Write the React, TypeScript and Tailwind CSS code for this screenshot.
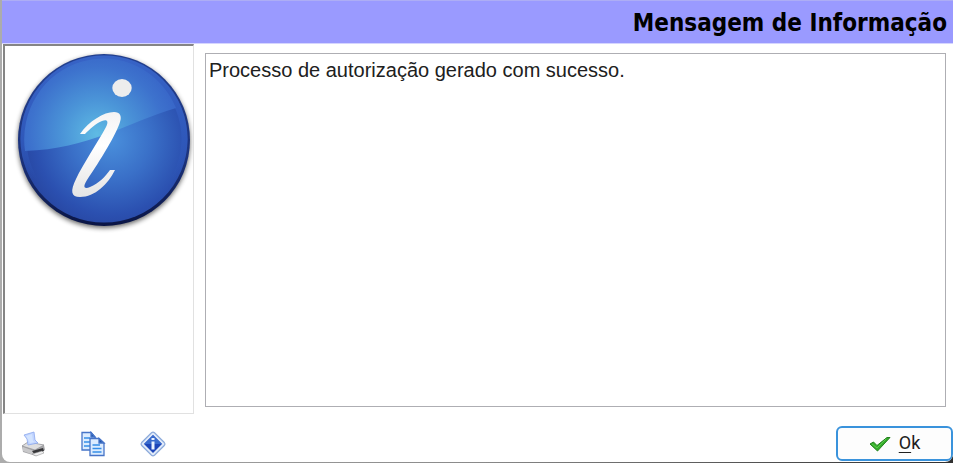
function InfoBadge() {
  return (
    <svg viewBox="0 0 180 184" className="w-[180px] h-[184px] shrink-0" role="img" aria-label="Informação">
      <defs>
        <radialGradient id="base" gradientUnits="userSpaceOnUse" cx="98" cy="90" r="88">
          <stop offset="0" stopColor="#4a90dc" />
          <stop offset="0.45" stopColor="#3a70c8" />
          <stop offset="0.85" stopColor="#2b50b0" />
          <stop offset="1" stopColor="#2848a4" />
        </radialGradient>
        <radialGradient id="gloss" gradientUnits="userSpaceOnUse" cx="84" cy="84" r="84">
          <stop offset="0" stopColor="#5fbbe4" />
          <stop offset="0.4" stopColor="#4b95d8" />
          <stop offset="0.8" stopColor="#3d72cd" />
          <stop offset="1" stopColor="#3866c8" />
        </radialGradient>
        <linearGradient id="rim" x1="0" y1="0" x2="0" y2="1">
          <stop offset="0" stopColor="#23408f" />
          <stop offset="0.6" stopColor="#1c337d" />
          <stop offset="1" stopColor="#0a1545" />
        </linearGradient>
        <linearGradient id="edge" x1="0" y1="0" x2="0" y2="1">
          <stop offset="0" stopColor="#3763c6" />
          <stop offset="0.5" stopColor="#2f58ba" />
          <stop offset="0.75" stopColor="#2f58ba" stopOpacity="0" />
        </linearGradient>
        <linearGradient id="letter" x1="0" y1="0" x2="0" y2="1">
          <stop offset="0" stopColor="#f4f4f4" />
          <stop offset="0.4" stopColor="#ffffff" />
          <stop offset="1" stopColor="#e4e4e4" />
        </linearGradient>
        <filter id="shade" x="-10%" y="-10%" width="120%" height="120%">
          <feGaussianBlur stdDeviation="2.5" />
        </filter>
      </defs>
      <circle cx="91" cy="92" r="86" fill="#000" opacity="0.6" filter="url(#shade)" />
      <circle cx="91" cy="90" r="86" fill="url(#rim)" />
      <circle cx="91" cy="89" r="83.5" fill="url(#base)" />
      <circle cx="91" cy="89" r="80.5" fill="none" stroke="url(#edge)" strokeWidth="6" />
      <path d="M12 101A79 81 0 0 1 163 58C116 72 75 99 12 101Z" fill="url(#gloss)" />
      <ellipse cx="109" cy="38" rx="9.7" ry="9" fill="#ededed" />
      <path
        d="M67 84C76 71 91 62 101 62C107 62 109 66 107 72C104 83 87 111 74 130C69 138 72 139 77 137C86 133 92 127 97 120L102 120C95 134 82 147 67 147C58 147 57 141 63 129C70 114 85 92 93 77C96 71 94 69 89 71C83 73 77 79 72 84Z"
        fill="url(#letter)"
      />
    </svg>
  );
}

function PrinterIcon() {
  return (
    <svg viewBox="0 0 26 26" className="size-[26px]" aria-hidden="true">
      <path d="M2 15L8 11L24 14L25 19L16 25L3 21Z" fill="#a5a5a8" />
      <path d="M2 15L8 11L24 14L15 19Z" fill="#dededf" stroke="#929296" strokeWidth=".7" />
      <path d="M4 4L14 1L15 9L18 12L8 14L7 8Z" fill="#c1d4ff" stroke="#8ba8ee" strokeWidth=".8" />
      <path d="M6 5L12 3L13 10L15 11L10 12Z" fill="#d3e4ff" />
      <path d="M3 16L14 20V24L3 20Z" fill="#c8c8ca" />
      <path d="M12 20L23 17L24 20L15 24Z" fill="#353538" />
      <path d="M12 23L22 20L24 22L16 25Z" fill="#eeeeef" stroke="#888" strokeWidth=".5" />
    </svg>
  );
}

function CopyIcon() {
  return (
    <svg viewBox="0 0 26 26" className="size-[26px]" aria-hidden="true">
      <g stroke="#4674c8" strokeWidth="1.3">
        <path d="M2 1.5H11L15 6V19H2Z" fill="#dcecff" />
        <path d="M11 1.5V6H15Z" fill="#1f55a8" />
        <path d="M4 7H10M4 11H10M4 15H10" stroke="#368ee8" strokeWidth="1.7" />
        <path d="M10 7.5H19L24 12V24.5H10Z" fill="#dcecff" />
        <path d="M19 7.5V12H24Z" fill="#1f55a8" />
        <path d="M12.5 14H20M12.5 17.5H21.5M12.5 21H21.5" stroke="#368ee8" strokeWidth="1.7" />
      </g>
    </svg>
  );
}

function DiamondIcon() {
  return (
    <svg viewBox="0 0 26 26" className="size-[26px]" aria-hidden="true">
      <path d="M11.5 1.8Q13 .6 14.5 1.8L24.3 11.5Q25.5 13 24.3 14.5L14.5 24.2Q13 25.4 11.5 24.2L1.7 14.5Q.5 13 1.7 11.5Z" fill="#dfe9f8" stroke="#8caadb" strokeWidth="1.2" />
      <path d="M13 4L22 13L13 22L4 13Z" fill="#1c45b8" />
      <path d="M13 4L22 13H4Z" fill="#386bce" />
      <path d="M11.5 7H14.5V9H11.5ZM11.5 10.5H14.5V18.5H11.5Z" fill="#e9f2ff" />
    </svg>
  );
}

function CheckIcon() {
  return (
    <svg viewBox="0 0 22 18" className="w-[22px] h-[18px]" aria-hidden="true">
      <path d="M1 10L4.5 8L8 11.5L18 3.5L21 3.5L8.5 17Z" fill="#35ad2b" stroke="#23801d" strokeWidth="1" strokeLinejoin="round" />
      <path d="M3 10L8 14L17 5" fill="none" stroke="#5acb4b" strokeWidth="1" />
    </svg>
  );
}

export default function App() {
  return (
    <div className="min-h-screen flex flex-col bg-linear-to-r from-[#acacac] via-[#8a8a8a] to-[#303030] pl-0.5 pb-px font-['Liberation_Sans',Arial,sans-serif] text-[#202020]">
      <main className="flex-1 flex flex-col bg-white rounded-b-lg overflow-hidden">
        <header className="h-11 shrink-0 flex items-center justify-end pr-1.5 pt-0.5 bg-[#9a9aff] border-t border-t-[#adadf5] border-b border-b-[#d5d5ff]">
          <h1 className="font-['DejaVu_Sans_Condensed','DejaVu_Sans',Tahoma,sans-serif] font-bold text-2xl leading-8 text-black">
            Mensagem de Informação
          </h1>
        </header>
        <div className="flex-1 flex pl-px pr-[7px]">
          <aside className="w-[191px] shrink-0 pl-2 pt-1 border-t-2 border-l-2 border-r border-b border-t-[#858585] border-l-[#858585] border-r-[#e1e1e1] border-b-[#e1e1e1]">
            <InfoBadge />
          </aside>
          <div className="flex-1 flex pt-[9px] pb-[7px] pl-[11px]">
            <textarea
              readOnly
              aria-label="Mensagem"
              defaultValue="Processo de autorização gerado com sucesso."
              className="flex-1 min-w-0 resize-none outline-none border border-[#aeaeb3] bg-white px-[3px] py-1 text-xl leading-6 text-[#202020]"
            />
          </div>
        </div>
        <footer className="h-12 shrink-0 flex items-center justify-between pl-[18px]">
          <div className="flex gap-[34px] pt-3">
            <button type="button" aria-label="Imprimir"><PrinterIcon /></button>
            <button type="button" aria-label="Copiar"><CopyIcon /></button>
            <button type="button" aria-label="Detalhes"><DiamondIcon /></button>
          </div>
          <div className="pt-2.5">
            <button type="button" className="w-[117px] h-[35px] flex items-center justify-center gap-2 rounded-md border-2 border-[#3a93dc] bg-[#fdfdfd] font-[Roboto,sans-serif] text-lg">
              <CheckIcon />
              <span><span className="underline underline-offset-3">O</span>k</span>
            </button>
          </div>
        </footer>
      </main>
    </div>
  );
}
